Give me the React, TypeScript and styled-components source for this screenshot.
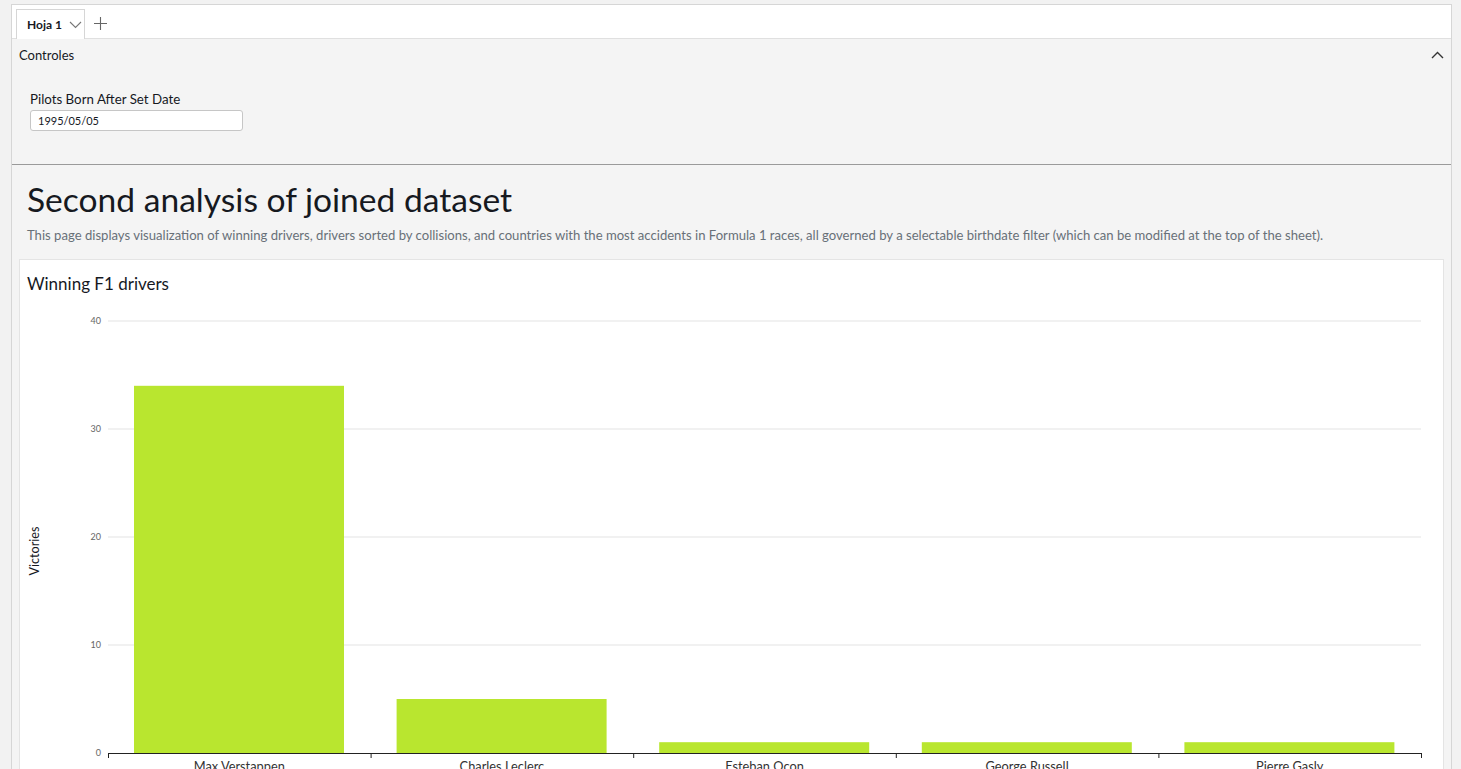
import styled, { createGlobalStyle } from "styled-components";

const GlobalStyle = createGlobalStyle`
  html, body {
    margin: 0;
    padding: 0;
    overflow: hidden;
    background: #f2f2f2;
    font-family: Lato, "Liberation Sans", sans-serif;
    color: #16191f;
  }
`;

const drivers = [
  { name: "Max Verstappen", wins: 34 },
  { name: "Charles Leclerc", wins: 5 },
  { name: "Esteban Ocon", wins: 1 },
  { name: "George Russell", wins: 1 },
  { name: "Pierre Gasly", wins: 1 },
];

const ticks = [0, 10, 20, 30, 40];

const ChevronDown = () => (
  <svg width="13" height="8" viewBox="0 0 13 8">
    <path d="M1 1l5.5 5.5L12 1" fill="none" stroke="#777" strokeWidth="1.1" />
  </svg>
);

const ChevronUp = () => (
  <svg width="13" height="8" viewBox="0 0 13 8">
    <path d="M1 7l5.5-5.5L12 7" fill="none" stroke="#333" strokeWidth="1.4" />
  </svg>
);

const Plus = () => (
  <svg width="13" height="13" viewBox="0 0 13 13">
    <path d="M6.5 0v13M0 6.5h13" stroke="#666" strokeWidth="1.1" />
  </svg>
);

const WinsChart = () => {
  const left = 88;
  const right = 1401;
  const base = 453;
  const unit = 10.8;
  const band = (right - left) / drivers.length;
  return (
    <svg width="1422" height="480" viewBox="0 0 1422 480">
      {ticks.map((t) => (
        <g key={t}>
          {t > 0 && (
            <line x1={left} x2={right} y1={base - t * unit} y2={base - t * unit} stroke="#e3e3e3" />
          )}
          <text x={81} y={base - t * unit + 3} textAnchor="end" fontSize="9" fill="#666">
            {t}
          </text>
        </g>
      ))}
      {drivers.map((d, i) => {
        const x0 = left + i * band;
        return (
          <g key={d.name}>
            <rect x={x0 + 26} y={base - d.wins * unit} width={210} height={d.wins * unit} fill="#b9e62f" />
            <text x={x0 + band / 2} y={471} textAnchor="middle" fontSize="12.8" fill="#333">
              {d.name}
            </text>
          </g>
        );
      })}
      <line x1={left} x2={right} y1={base + 0.5} y2={base + 0.5} stroke="#222" />
      {drivers.map((_, i) => (
        <line key={i} x1={left + i * band + 0.5} x2={left + i * band + 0.5} y1={base} y2={base + 5} stroke="#222" />
      ))}
      <line x1={right + 0.5} x2={right + 0.5} y1={base} y2={base + 5} stroke="#222" />
      <text x={19} y={251} transform="rotate(-90 19 251)" textAnchor="middle" fontSize="12.6" fill="#16191f">
        Victories
      </text>
    </svg>
  );
};

export default function App() {
  return (
    <>
      <GlobalStyle />
      <Shell>
        <TabBar>
          <Tab>
            <TabLabel>Hoja 1</TabLabel>
            <ChevronDown />
          </Tab>
          <AddTab>
            <Plus />
          </AddTab>
        </TabBar>

        <Controls>
          <ControlsHeader>
            <ControlsTitle>Controles</ControlsTitle>
            <ChevronUp />
          </ControlsHeader>
          <Field>
            <FieldLabel>Pilots Born After Set Date</FieldLabel>
            <DateInput>1995/05/05</DateInput>
          </Field>
        </Controls>

        <Sheet>
          <SheetTitle>Second analysis of joined dataset</SheetTitle>
          <SheetDescription>
            This page displays visualization of winning drivers, drivers sorted by collisions, and countries with
            the most accidents in Formula 1 races, all governed by a selectable birthdate filter (which can be
            modified at the top of the sheet).
          </SheetDescription>
          <Card>
            <CardTitle>Winning F1 drivers</CardTitle>
            <WinsChart />
          </Card>
        </Sheet>
      </Shell>
    </>
  );
}

const Shell = styled.div`
  margin: 4px 9px 0 11px;
  border: 1px solid #d6d6d6;
  border-bottom: none;
  background: #f4f4f4;
  height: 800px;
`;

const TabBar = styled.div`
  display: flex;
  align-items: flex-end;
  height: 33px;
  padding-left: 4px;
  background: #fff;
  border-bottom: 1px solid #e0e0e0;
`;

const Tab = styled.div`
  display: flex;
  align-items: center;
  gap: 7px;
  box-sizing: border-box;
  width: 69px;
  height: 30px;
  margin-bottom: -1px;
  padding: 0 0 0 10px;
  background: #fff;
  border: 1px solid #d6d6d6;
  border-bottom: none;
`;

const TabLabel = styled.span`
  font-size: 12px;
  font-weight: 700;
  color: #16191f;
`;

const AddTab = styled.div`
  display: flex;
  align-items: center;
  height: 30px;
  padding-left: 9px;
`;

const Controls = styled.section`
  height: 125px;
  padding: 0 7px;
  border-bottom: 1px solid #9a9a9a;
  background: #f4f4f4;
`;

const ControlsHeader = styled.div`
  display: flex;
  align-items: center;
  justify-content: space-between;
  height: 31px;
  padding-right: 0;
`;

const ControlsTitle = styled.span`
  font-size: 13px;
  color: #16191f;
`;

const Field = styled.div`
  display: flex;
  flex-direction: column;
  gap: 3px;
  margin: 21px 0 0 11px;
`;

const FieldLabel = styled.label`
  font-size: 13.3px;
  color: #16191f;
`;

const DateInput = styled.div`
  box-sizing: border-box;
  width: 213px;
  height: 21px;
  padding: 0 7px;
  line-height: 19px;
  font-size: 11px;
  color: #16191f;
  background: #fff;
  border: 1px solid #c6c6c6;
  border-radius: 3px;
`;

const Sheet = styled.main`
  padding: 16px 7px 0 7px;
`;

const SheetTitle = styled.h1`
  margin: 0 0 0 8px;
  font-size: 33.6px;
  font-weight: 400;
  line-height: 36px;
  color: #16191f;
`;

const SheetDescription = styled.p`
  margin: 10px 0 16px 8px;
  font-size: 13.1px;
  line-height: 16px;
  color: #687078;
`;

const Card = styled.div`
  background: #fff;
  border: 1px solid #e4e4e4;
  height: 520px;
`;

const CardTitle = styled.h2`
  margin: 0;
  padding: 13px 7px 0 7px;
  height: 27px;
  font-size: 17px;
  font-weight: 400;
  line-height: 22px;
  color: #16191f;
`;
